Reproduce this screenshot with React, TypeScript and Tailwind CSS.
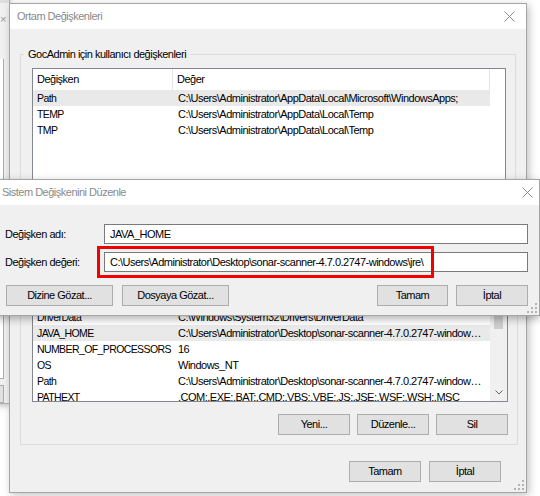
type Row = { name: string; value: string; selected?: boolean };

const userRows: Row[] = [
  { name: "Path", value: "C:\\Users\\Administrator\\AppData\\Local\\Microsoft\\WindowsApps;", selected: true },
  { name: "TEMP", value: "C:\\Users\\Administrator\\AppData\\Local\\Temp" },
  { name: "TMP", value: "C:\\Users\\Administrator\\AppData\\Local\\Temp" },
];

const systemRows: Row[] = [
  { name: "ComSpec", value: "C:\\Windows\\system32\\cmd.exe" },
  { name: "DriverData", value: "C:\\Windows\\System32\\Drivers\\DriverData" },
  { name: "JAVA_HOME", value: "C:\\Users\\Administrator\\Desktop\\sonar-scanner-4.7.0.2747-windows\\jre\\", selected: true },
  { name: "NUMBER_OF_PROCESSORS", value: "16" },
  { name: "OS", value: "Windows_NT" },
  { name: "Path", value: "C:\\Users\\Administrator\\Desktop\\sonar-scanner-4.7.0.2747-windows\\bin" },
  { name: "PATHEXT", value: ".COM;.EXE;.BAT;.CMD;.VBS;.VBE;.JS;.JSE;.WSF;.WSH;.MSC" },
  { name: "PROCESSOR_ARCHITECTURE", value: "AMD64" },
];

function CloseIcon() {
  return (
    <svg width="11" height="11" viewBox="0 0 11 11" className="shrink-0">
      <path d="M0.5 0.5 L10.5 10.5 M10.5 0.5 L0.5 10.5" stroke="#8c8c8c" strokeWidth="1" />
    </svg>
  );
}

function Grip() {
  return (
    <svg width="12" height="12" viewBox="0 0 12 12">
      {[
        [9, 1],
        [9, 5],
        [5, 5],
        [9, 9],
        [5, 9],
        [1, 9],
      ].map(([x, y]) => (
        <rect key={`${x}-${y}`} x={x} y={y} width="2" height="2" fill="#b4b4b4" />
      ))}
    </svg>
  );
}

function Btn({ label, w }: { label: string; w: string }) {
  return (
    <button
      type="button"
      className={`${w} h-[21px] shrink-0 border border-[#adadad] bg-[#e1e1e1] leading-none text-black`}
    >
      {label}
    </button>
  );
}

function ListView({ rows, scroll }: { rows: Row[]; scroll?: boolean }) {
  return (
    <div className="flex h-[131px] overflow-hidden border border-[#828790] bg-white">
      <div className="min-w-0 flex-1">
        <div className="flex h-[21px] items-center">
          <div className="w-[140px] border-r border-[#e5e5e5] pl-[4px] leading-[21px]">Değişken</div>
          <div className="w-[317px] border-r border-[#e5e5e5] pl-[4px] leading-[21px]">Değer</div>
        </div>
        {rows.map((r) => (
          <div
            key={r.name}
            className={`flex h-[16px] w-[457px] items-center ${r.selected ? "bg-[#e9e9e9]" : ""}`}
          >
            <div className="w-[140px] shrink-0 truncate pl-[4px] text-[10.5px] leading-[16px] tracking-[-0.6px]">
              {r.name}
            </div>
            <div className="w-[312px] truncate pl-[5px] leading-[16px]">{r.value}</div>
          </div>
        ))}
      </div>
      {scroll && (
        <div className="flex w-[17px] shrink-0 flex-col bg-[#f0f0f0]">
          <div className="h-[17px]" />
          <div className="mx-auto mt-[6px] h-[34px] w-[9px] bg-[#cdcdcd]" />
          <div className="flex-1" />
          <div className="flex h-[17px] items-center justify-center">
            <svg width="8" height="5" viewBox="0 0 8 5">
              <path d="M0.5 0.5 L4 4 L7.5 0.5" stroke="#606060" fill="none" strokeWidth="1" />
            </svg>
          </div>
        </div>
      )}
    </div>
  );
}

function Group({ title, rows, scroll, h }: { title: string; rows: Row[]; scroll?: boolean; h: string }) {
  return (
    <fieldset className={`${h} border border-[#dcdcdc] pt-[6px] pr-[9px] pb-[10px] pl-[11px]`}>
      <legend className="ml-[-8px] px-[4px] leading-[16px]">{title}</legend>
      <ListView rows={rows} scroll={scroll} />
      <div className="mt-[12px] flex justify-end gap-[7px]">
        <Btn label="Yeni..." w="w-[72px]" />
        <Btn label="Düzenle..." w="w-[72px]" />
        <Btn label="Sil" w="w-[72px]" />
      </div>
    </fieldset>
  );
}

export default function App() {
  return (
    <div className="relative h-[496px] w-[540px] overflow-hidden bg-white font-['Liberation_Sans',Arial,sans-serif] text-[11px] tracking-[-0.5px] text-black">
      {/* window far behind, only its right edge shows */}
      <div className="absolute top-[-10px] left-[-291px] flex h-[414px] w-[301px] flex-col border border-[#b0b0b0] bg-[#f0f0f0] shadow-[0_2px_6px_rgba(0,0,0,0.25)]">
        <div className="h-[13px] bg-[#dedede]" />
        <div className="flex h-[34px] items-center justify-end pr-[3px] text-[#999]">×</div>
        <div className="ml-auto mt-[23px] mr-[5px] h-[335px] w-[8px] border-r border-b border-[#adadad] bg-white" />
        <div className="ml-auto mt-[6px] mr-[5px] h-[19px] w-[8px] border border-[#adadad] bg-[#e1e1e1]" />
      </div>

      {/* Ortam Değişkenleri */}
      <div className="absolute top-[3px] left-[9px] flex h-[490px] w-[518px] flex-col border border-[#a5a5a5] bg-[#f0f0f0] shadow-[2px_2px_8px_rgba(0,0,0,0.25)]">
        <div className="flex h-[25px] shrink-0 items-center justify-between bg-white pr-[11px] pl-[7px]">
          <span className="text-[#8a8a8a]">Ortam Değişkenleri</span>
          <CloseIcon />
        </div>
        <div className="flex flex-1 flex-col px-[10px] pt-[17px]">
          <Group title="GocAdmin için kullanıcı değişkenleri" rows={userRows} h="h-[195px]" />
          <div className="mt-[8px]">
            <Group title="Sistem değişkenleri" rows={systemRows} scroll h="h-[196px]" />
          </div>
          <div className="mt-[16px] flex justify-end gap-[8px] pr-[15px]">
            <Btn label="Tamam" w="w-[72px]" />
            <Btn label="İptal" w="w-[72px]" />
          </div>
        </div>
        <div className="absolute right-[1px] bottom-[1px]">
          <Grip />
        </div>
      </div>

      {/* Sistem Değişkenini Düzenle */}
      <div className="absolute top-[179px] left-[-6px] flex h-[137px] w-[546px] flex-col border border-[#a5a5a5] bg-[#f0f0f0] shadow-[0_3px_8px_rgba(0,0,0,0.3)]">
        <div className="flex h-[25px] shrink-0 items-center justify-between bg-white pr-[6px] pl-[7px]">
          <span className="text-[#8a8a8a]">Sistem Değişkenini Düzenle</span>
          <CloseIcon />
        </div>
        <div className="flex flex-col gap-[8px] pt-[19px] pr-[11px] pl-[10px]">
          <div className="flex h-[20px] items-center">
            <span className="w-[99px] shrink-0">Değişken adı:</span>
            <div className="flex h-[20px] flex-1 items-center border border-[#7a7a7a] bg-white pl-[5px]">JAVA_HOME</div>
          </div>
          <div className="flex h-[20px] items-center">
            <span className="w-[99px] shrink-0">Değişken değeri:</span>
            <div className="flex h-[20px] flex-1 items-center overflow-hidden border border-[#7a7a7a] bg-white pl-[5px] whitespace-nowrap">
              C:\Users\Administrator\Desktop\sonar-scanner-4.7.0.2747-windows\jre\
            </div>
          </div>
          <div className="mt-[5px] flex items-center">
            <div className="ml-[1px] flex gap-[9px]">
              <Btn label="Dizine Gözat..." w="w-[107px]" />
              <Btn label="Dosyaya Gözat..." w="w-[107px]" />
            </div>
            <div className="ml-auto flex gap-[8px]">
              <Btn label="Tamam" w="w-[71px]" />
              <Btn label="İptal" w="w-[72px]" />
            </div>
          </div>
        </div>
        {/* red highlight drawn over the value field */}
        <div className="absolute top-[66px] left-[102px] h-[32px] w-[337px] border-[3px] border-[#f20000]" />
        <div className="absolute right-[1px] bottom-[1px]">
          <Grip />
        </div>
      </div>
    </div>
  );
}
